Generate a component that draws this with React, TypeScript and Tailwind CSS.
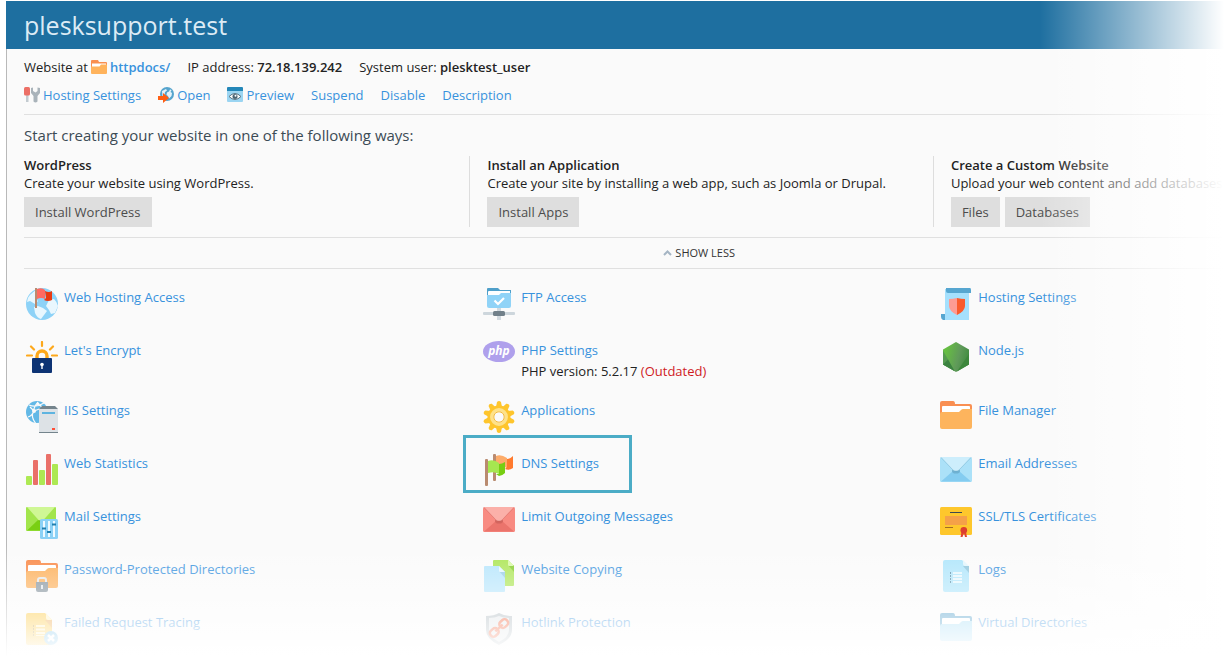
import type { ReactNode } from "react";

const Svg = ({ size = 32, children }: { size?: number; children: ReactNode }) => (
    <svg
        width={size}
        height={size}
        viewBox={`0 0 ${size} ${size}`}
        className="shrink-0"
        aria-hidden="true"
    >
        {children}
    </svg>
);

/* 16px icons */

const SmallFolder = () => (
    <Svg size={16}>
        <path d="M0 2a1 1 0 0 1 1-1h6l1 2h7a1 1 0 0 1 1 1v4H0z" fill="#f98f4f" />
        <path d="M1 4.500h14V9H1z" fill="#fff" />
        <path d="M0 7.500h8.500L10 5.500h6V14a1 1 0 0 1-1 1H1a1 1 0 0 1-1-1z" fill="#ffb35c" />
    </Svg>
);

const ToolsIcon = () => (
    <Svg size={16}>
        <path d="M2 8h2.500v7H2z" fill="#c3cbd0" />
        <rect x="0" y="0" width="6" height="8.500" rx="1.500" fill="#ec6f66" />
        <path
            d="M7 1l2-0.500V4l2.500 1.500L13.500 4V0.500l2.500 0.500v5l-2.500 3v5.500q-2 2-4 0V9L7 6z"
            fill="#a9b3ba"
        />
    </Svg>
);

const OpenIcon = () => (
    <Svg size={16}>
        <circle cx="9" cy="7" r="7" fill="#56a4cd" />
        <path d="M4 4l4-2 1 1.500-2 1.500-0.500 3-2 1.500z" fill="#e6f3fa" />
        <path d="M9 5.500l2-1 1-2 1.500 0.500-1 2 1.500 1-0.500 3-2.500 2.500-1-2.500L8.500 8z" fill="#e6f3fa" />
        <path d="M0 9h5V6l6 5-6 5v-3H0z" fill="#ff5f14" />
    </Svg>
);

const PreviewIcon = () => (
    <Svg size={16}>
        <path d="M0 1q0-1 1-1h14q1 0 1 1v4H0z" fill="#2487b8" />
        <path d="M0 4h16v10q0 1-1 1H1q-1 0-1-1z" fill="#9bd5f2" />
        <path d="M2 9.500Q8 3.500 14 9.500 8 15.500 2 9.500z" fill="#fff" stroke="#5a7483" />
        <circle cx="8" cy="9.500" r="2.500" fill="#4a6473" />
        <circle cx="8.500" cy="8.800" r="1" fill="#fff" />
    </Svg>
);

/* 32px icons */

const GlobeFlagIcon = () => (
    <Svg>
        <circle cx="16" cy="16" r="16" fill="#8dd2f7" />
        <path d="M4 7q3-3 6-5l-1 8 3 3-3 3-5-3-3 1q0-4 3-7z" fill="#e9f7fe" />
        <path d="M8 19l4-1 5 2 4 3-3 4-3 4q-4-1-6-6z" fill="#e9f7fe" />
        <path d="M23 12l5-1q3 3 4 7l-3 7-4 1-2-4-3-4z" fill="#e9f7fe" />
        <path d="M9 0h2v20H9z" fill="#b98b70" />
        <path d="M11 1q5-2 8 1v9q-4-2-8 0z" fill="#ff6a61" />
        <path d="M19 3q4 2 7 0v9q-4 2-8 0l2-2z" fill="#e93a12" />
    </Svg>
);

const LetsEncryptIcon = () => (
    <Svg>
        <g stroke="#fda81b" strokeWidth="2.200" strokeLinecap="round" fill="none">
            <path d="M16 1v4M5 5.500l3 3M27 5.500l-3 3M1 14.500h5M26 14.500h5" />
        </g>
        <path d="M11 18v-3a5 5 0 0 1 10 0v3" fill="none" stroke="#fda81b" strokeWidth="3.400" />
        <rect x="6" y="17" width="20" height="15" rx="1" fill="#0d3374" />
        <circle cx="16" cy="23.500" r="1.800" fill="#fff" />
        <path d="M15.300 24h1.400v4h-1.400z" fill="#fff" />
    </Svg>
);

const IisIcon = () => (
    <Svg>
        <circle cx="11" cy="11" r="11" fill="#62b8e6" />
        <g stroke="#fafafa" strokeWidth="1.200" fill="none">
            <path d="M3 4q7 3 15-2M8 10q-4 5 2 13M7 10q2-6 5-9M4 6l4 4M2 16q4-1 6-6M12 3q3 3 8 4M8 10l8-3" />
        </g>
        <circle cx="8" cy="10" r="2" fill="#fafafa" />
        <circle cx="12" cy="3" r="1.500" fill="#fafafa" />
        <path d="M13 8l3-3h13l3 3v2H13z" fill="#74848c" />
        <path d="M13 8h19v23H13z" fill="#dde2e6" />
        <path d="M13 31h19v1H13z" fill="#74848c" />
        <path d="M16 11h13v2H16z" fill="#5eb4e0" />
        <path d="M26 27h3v2h-3z" fill="#ff4f38" />
    </Svg>
);

const StatsIcon = () => (
    <Svg>
        <rect x="0" y="22" width="6" height="9" rx="1" fill="#ade953" />
        <rect x="7" y="6" width="5" height="25" rx="1" fill="#ea7069" />
        <rect x="13" y="16" width="6" height="15" rx="1" fill="#ade953" />
        <rect x="20" y="0" width="5" height="31" rx="1" fill="#ea7069" />
        <rect x="26" y="10" width="6" height="21" rx="1" fill="#ade953" />
    </Svg>
);

const MailSettingsIcon = () => (
    <Svg>
        <rect x="0" y="0" width="30" height="24" rx="1" fill="#a2e54c" />
        <path d="M1 23.500L12 13h6l11 10.500z" fill="#79cf13" />
        <path d="M1 0h28L17 13.500h-4z" fill="#cff795" />
        <path d="M13 13.500h4L15 16z" fill="#5faa1f" />
        <rect x="14" y="12" width="18" height="20" rx="1.500" fill="#8bd1f6" />
        <path d="M17 14h2v16h-2zM22 14h2v16h-2zM27 14h2v16h-2z" fill="#effaff" />
        <path d="M16 20.500h4v2h-4zM21 24h4v2h-4zM26 16.500h4v2h-4z" fill="#1f7eae" />
    </Svg>
);

const FolderShape = ({
    back,
    front,
}: {
    back: string;
    front: string;
}) => (
    <>
        <path d="M0 2Q0 0 2 0h11q2 0 2 3h15q2 0 2 2v9H0z" fill={back} />
        <path d="M2 6q0-1 1-1h26q1 0 1 1v7H2z" fill="#fff" />
        <path
            d="M0 13q0-2 2-2h17l2-2q1-1 2-1h9v18q0 2-2 2H2q-2 0-2-2z"
            fill={front}
        />
    </>
);

const FolderIcon = () => (
    <Svg>
        <FolderShape back="#f98f52" front="#fdb45d" />
    </Svg>
);

const BlueFolderIcon = () => (
    <Svg>
        <FolderShape back="#4c9cc8" front="#a0dbf6" />
    </Svg>
);

const LockedFolderIcon = () => (
    <Svg>
        <FolderShape back="#f98744" front="#fcad55" />
        <path d="M12 24v-4q0-2 2-2h4q2 0 2 2v4" fill="none" stroke="#e3e7ea" strokeWidth="2" />
        <path d="M10 22h12v8q0 2-2 2h-8q-2 0-2-2z" fill="#82909a" />
        <path d="M15 25h2v4h-2z" fill="#e3e7ea" />
    </Svg>
);

const TracingIcon = () => (
    <Svg>
        <path d="M0 2q0-2 2-2h17l7 7v23q0 2-2 2H2q-2 0-2-2z" fill="#fcc636" />
        <path d="M19 7h7v8z" fill="#eda23c" />
        <path d="M20 0l6 7h-4q-2 0-2-2z" fill="#fff0b8" />
        <path d="M10 12h9v2h-9zM10 15.500h9v2h-9zM10 19h9v2h-9zM10 22h9v1h-9z" fill="#fff0b8" />
        <path d="M7 12h1v2H7zM7 15h1v2H7zM7 18h1v2H7zM7 21h1v2H7z" fill="#a98733" />
        <circle cx="25" cy="25" r="7" fill="#62b8e6" />
        <path d="M22 22l6 6M28 22l-6 6" stroke="#fff" strokeWidth="2.500" />
    </Svg>
);

const FtpIcon = () => (
    <Svg>
        <path d="M4 1q0-1 1-1h10l2 2h11v8H4z" fill="#4f9fc9" />
        <path d="M5 4q0-1 1-1h21v5H5z" fill="#fff" />
        <path d="M4 7h12l2-2h10v13q0 2-2 2H6q-2 0-2-2z" fill="#90d3f7" />
        <path d="M11.500 12.500l3.500 3.500 6-6" fill="none" stroke="#fff" strokeWidth="2.200" />
        <path d="M14 20h4v12h-4z" fill="#d2dae0" />
        <rect x="0" y="24" width="32" height="3" rx="1" fill="#cdd6dc" />
        <rect x="10" y="23" width="12" height="5" rx="1.500" fill="#71808a" />
    </Svg>
);

const PhpIcon = () => (
    <Svg>
        <ellipse cx="16" cy="10.500" rx="16" ry="10.500" fill="#afa0ec" />
        <text
            x="16"
            y="13.500"
            textAnchor="middle"
            fill="#fff"
            fontFamily="Open Sans, sans-serif"
            fontSize="12"
            fontWeight="700"
            fontStyle="italic"
        >
            php
        </text>
    </Svg>
);

const GEAR_TEETH = [0, 36, 72, 108, 144, 180, 216, 252, 288, 324];

const GearIcon = () => (
    <Svg>
        {GEAR_TEETH.map((angle) => (
            <path
                key={angle}
                d="M13 6l1-5q2-2 4 0l1 5z"
                fill="#fec52c"
                transform={`rotate(${angle} 16 16)`}
            />
        ))}
        <circle cx="16" cy="16" r="11.500" fill="#fec52c" />
        <circle cx="16" cy="16" r="7.200" fill="#fff" stroke="#fee28a" strokeWidth="3.500" />
        <circle cx="16" cy="16" r="5.200" fill="#fafafa" stroke="#f3b93c" />
    </Svg>
);

const DnsIcon = () => (
    <Svg>
        <rect x="10" y="0" width="3" height="27" rx="1" fill="#b98b70" />
        <path d="M13 2q5-2 11 2v10q-5-3-11-1z" fill="#fdac6a" />
        <path d="M24 5q3 0 6-3v12q-4 3-8 1l2-2z" fill="#ff7a2e" />
        <rect x="2" y="5" width="3" height="27" rx="1" fill="#b98b70" />
        <path d="M5 7q6-2 11 2v11q-5-3-11-1z" fill="#a6e750" />
        <path d="M16 10q3 0 6-2v11q-3 3-6 3l-3-2h3z" fill="#77ce12" />
    </Svg>
);

const Envelope = ({
    y = 0,
    body,
    bottom,
    flap,
    seal,
}: {
    y?: number;
    body: string;
    bottom: string;
    flap: string;
    seal: string;
}) => (
    <Svg>
        <g transform={`translate(0 ${y})`}>
            <rect width="32" height="25" rx="1.500" fill={body} />
            <path d="M1 24.500L13 14h6l12 10.500z" fill={bottom} />
            <path d="M12 13h8v2l-2 1.500h-4L12 15z" fill={seal} fillOpacity="0.700" />
            <path d="M1 0h30L19 13q-1 1-2 1h-2q-1 0-2-1z" fill={flap} />
            <path
                d="M1 0.500l12 12.500q1 1 2 1h2q1 0 2-1l12-12.500"
                fill="none"
                stroke={seal}
                strokeOpacity="0.400"
            />
        </g>
    </Svg>
);

const RedMailIcon = () => (
    <Envelope body="#f88b82" bottom="#eb746c" flap="#fbb0a9" seal="#c95f59" />
);

const BlueMailIcon = () => (
    <Envelope y={3} body="#abe1f8" bottom="#84ccf0" flap="#cdeefc" seal="#65a5c4" />
);

const CopyIcon = () => (
    <Svg>
        <path d="M10 1q0-1 1-1h14l6 6v19q0 1-1 1H11q-1 0-1-1z" fill="#abe553" />
        <path d="M25 5h6v7z" fill="#82cc28" />
        <path d="M25 0l6 6h-5q-1 0-1-1z" fill="#d9f9a6" />
        <path d="M1 7q0-1 1-1h14l6 6v19q0 1-1 1H2q-1 0-1-1z" fill="#b5e5fc" />
        <path d="M16 11h6v7z" fill="#96cce5" />
        <path d="M16 6l6 6h-5q-1 0-1-1z" fill="#e6f7fe" />
    </Svg>
);

const HotlinkIcon = () => (
    <Svg>
        <path d="M3 3q8 0 13-3 5 3 13 3v14q0 9-13 15Q3 26 3 17z" fill="#a9b5bc" />
        <path d="M6 5q6 0 10-2 4 2 10 2v12q0 7-10 12Q6 24 6 17z" fill="#dfe4e7" />
        <g
            fill="none"
            stroke="#f04f23"
            strokeWidth="2.500"
            transform="rotate(-43 16 15)"
        >
            <rect x="5" y="11.500" width="9" height="7" rx="3" />
            <rect x="18" y="11.500" width="9" height="7" rx="3" />
            <path d="M11 15h10" />
        </g>
    </Svg>
);

const ScrollIcon = () => (
    <Svg>
        <path d="M5 1h24v31H5z" fill="#a5e0fd" />
        <path d="M6 0h24q1 0 1 2v3H8Q6 5 6 3z" fill="#56a6d0" />
        <path d="M1 26h4v6H3q-2-1-2-3z" fill="#56a6d0" />
        <path d="M9 11q4 0 8-1v17q-8-4-8-9z" fill="#fd9b93" />
        <path d="M17 10q4 1 8 1v7q0 5-8 9z" fill="#fa5b2d" />
    </Svg>
);

const NodeIcon = () => (
    <Svg>
        <defs>
            <linearGradient id="node" x1="0" x2="1" y1="0.300" y2="0.600">
                <stop offset="0.100" stopColor="#66be42" />
                <stop offset="0.600" stopColor="#609a5a" />
                <stop offset="1" stopColor="#3f8b3e" />
            </linearGradient>
        </defs>
        <path d="M16 1l13 7.500v15L16 31 3 23.500v-15z" fill="url(#node)" />
        <path d="M3 9.500l11.500 20.500L3 23.500z" fill="#559a50" />
        <path d="M29 13v10.500L17 30.500z" fill="#3d873c" />
        <path d="M3 23.500l5-5 6.500 11.500z" fill="#3b8240" />
    </Svg>
);

const CertificateIcon = () => (
    <Svg>
        <rect width="32" height="28" rx="1.500" fill="#fec72c" />
        <path d="M10 5h12v1H10z" fill="#3d4a50" />
        <path d="M5 9h22v9H5z" fill="#f5a148" />
        <path d="M5 20h8v1H5z" fill="#a06d24" />
        <path d="M21.500 25l2.500 1-1.500 4h-2zM26 25l-2 1 1 4h2z" fill="#e04231" />
        <circle cx="23.800" cy="23.300" r="3.300" fill="#dc3e2e" />
    </Svg>
);

const LogsIcon = () => (
    <Svg>
        <path d="M3 2q0-2 2-2h17l7 7v23q0 2-2 2H5q-2 0-2-2z" fill="#aee5fb" />
        <path d="M23 6h6v7z" fill="#8ec5dc" />
        <path d="M23 0l6 6h-4q-2 0-2-2z" fill="#e2f5fc" />
        <path d="M13 12h9v2h-9zM13 15h9v2h-9zM13 18h9v2h-9zM13 21h9v2h-9z" fill="#e6f7fd" />
        <path d="M10 12h1v2h-1zM10 15h1v2h-1zM10 18h1v2h-1zM10 21h1v2h-1z" fill="#5d8ea5" />
    </Svg>
);

type Tool = {
    label: string;
    icon: ReactNode;
    note?: ReactNode;
    highlighted?: boolean;
};

const tools: Tool[] = [
    { label: "Web Hosting Access", icon: <GlobeFlagIcon /> },
    { label: "FTP Access", icon: <FtpIcon /> },
    { label: "Hosting Settings", icon: <ScrollIcon /> },
    { label: "Let's Encrypt", icon: <LetsEncryptIcon /> },
    {
        label: "PHP Settings",
        icon: <PhpIcon />,
        note: (
            <>
                PHP version: 5.2.17 <span className="text-[#cf1a1f]">(Outdated)</span>
            </>
        ),
    },
    { label: "Node.js", icon: <NodeIcon /> },
    { label: "IIS Settings", icon: <IisIcon /> },
    { label: "Applications", icon: <GearIcon /> },
    { label: "File Manager", icon: <FolderIcon /> },
    { label: "Web Statistics", icon: <StatsIcon /> },
    { label: "DNS Settings", icon: <DnsIcon />, highlighted: true },
    { label: "Email Addresses", icon: <BlueMailIcon /> },
    { label: "Mail Settings", icon: <MailSettingsIcon /> },
    { label: "Limit Outgoing Messages", icon: <RedMailIcon /> },
    { label: "SSL/TLS Certificates", icon: <CertificateIcon /> },
    { label: "Password-Protected Directories", icon: <LockedFolderIcon /> },
    { label: "Website Copying", icon: <CopyIcon /> },
    { label: "Logs", icon: <LogsIcon /> },
    { label: "Failed Request Tracing", icon: <TracingIcon /> },
    { label: "Hotlink Protection", icon: <HotlinkIcon /> },
    { label: "Virtual Directories", icon: <BlueFolderIcon /> },
];

const actions: { label: string; icon?: ReactNode }[] = [
    { label: "Hosting Settings", icon: <ToolsIcon /> },
    { label: "Open", icon: <OpenIcon /> },
    { label: "Preview", icon: <PreviewIcon /> },
    { label: "Suspend" },
    { label: "Disable" },
    { label: "Description" },
];

const starters = [
    {
        title: "WordPress",
        text: "Create your website using WordPress.",
        buttons: ["Install WordPress"],
    },
    {
        title: "Install an Application",
        text: "Create your site by installing a web app, such as Joomla or Drupal.",
        buttons: ["Install Apps"],
    },
    {
        title: "Create a Custom Website",
        text: "Upload your web content and add databases",
        buttons: ["Files", "Databases"],
    },
];

function ToolItem({ label, icon, note, highlighted }: Tool) {
    return (
        <li className="relative flex gap-1.5">
            {icon}
            <div>
                <a href="#" className="block text-[#3892dd]">
                    {label}
                </a>
                {note && <p className="mt-[3px]">{note}</p>}
            </div>
            {highlighted && (
                <div className="pointer-events-none absolute -left-5 -top-[19px] h-[58px] w-[169px] border-3 border-[#4bacc6]" />
            )}
        </li>
    );
}

export default function App() {
    return (
        <div className="relative min-h-screen overflow-hidden bg-white pl-1.5 pt-px font-['Open_Sans',sans-serif] text-[13px] leading-[18px] text-[#222]">
            <header className="flex h-12 items-center bg-[#1e6fa0] px-[18px]">
                <h1 className="text-[25px] leading-8 text-[#dcebf5]">plesksupport.test</h1>
            </header>

            <main className="min-h-[calc(100vh-49px)] border-l border-[#b9b9b9] bg-[#fafafa]">
                <div className="w-[114%] pl-[17px] pr-5 pt-[9px]">
                    <div className="flex gap-[17px]">
                        <div className="flex items-center gap-[3px]">
                            <span>Website at</span>
                            <SmallFolder />
                            <a href="#" className="font-semibold text-[#3892dd]">
                                httpdocs/
                            </a>
                        </div>
                        <p>
                            IP address: <span className="font-semibold">72.18.139.242</span>
                        </p>
                        <p>
                            System user: <span className="font-semibold">plesktest_user</span>
                        </p>
                    </div>

                    <nav className="mt-2.5 flex gap-[17px] border-b border-[#e0e0e0] pb-2.5">
                        {actions.map(({ label, icon }) => (
                            <a
                                key={label}
                                href="#"
                                className="flex items-center gap-[3px] text-[#3892dd]"
                            >
                                {icon}
                                {label}
                            </a>
                        ))}
                    </nav>

                    <section className="border-b border-[#e0e0e0] pb-2.5 pt-[9px]">
                        <h2 className="text-[15px] leading-[22px] text-[#3c4b55]">
                            Start creating your website in one of the following ways:
                        </h2>
                        <div className="mt-2.5 grid grid-cols-3 gap-10">
                            {starters.map(({ title, text, buttons }) => (
                                <div
                                    key={title}
                                    className="border-[#ddd] not-first:-ml-[18px] not-first:border-l not-first:pl-[17px]"
                                >
                                    <h3 className="font-semibold">{title}</h3>
                                    <p className="whitespace-nowrap">{text}</p>
                                    <div className="mt-[5px] flex gap-[5px]">
                                        {buttons.map((button) => (
                                            <button
                                                key={button}
                                                type="button"
                                                className="h-[30px] bg-[#dedede] px-[11px] text-[#4c4c4c]"
                                            >
                                                {button}
                                            </button>
                                        ))}
                                    </div>
                                </div>
                            ))}
                        </div>
                    </section>

                    <div className="flex h-[31px] justify-center border-b border-[#e0e0e0]">
                        <button
                            type="button"
                            className="flex items-center gap-[3px] text-[11px] text-[#333]"
                        >
                            <svg width="9" height="6" viewBox="0 0 9 6" aria-hidden="true">
                                <path d="M1 5l3.500-3.500L8 5" fill="none" stroke="#a5b5c4" strokeWidth="2" />
                            </svg>
                            SHOW LESS
                        </button>
                    </div>

                    <ul className="grid grid-cols-3 gap-x-[23px] gap-y-[21px] pb-3 pl-0.5 pt-[19px]">
                        {tools.map((tool) => (
                            <ToolItem key={tool.label} {...tool} />
                        ))}
                    </ul>
                </div>
            </main>

            {/* the page fades out towards the right and the bottom */}
            <div className="pointer-events-none absolute inset-y-0 right-0 w-[184px] bg-linear-to-r from-white/0 to-white" />
            <div className="pointer-events-none absolute inset-x-0 bottom-0 h-[112px] bg-linear-to-b from-white/0 to-white" />
        </div>
    );
}
